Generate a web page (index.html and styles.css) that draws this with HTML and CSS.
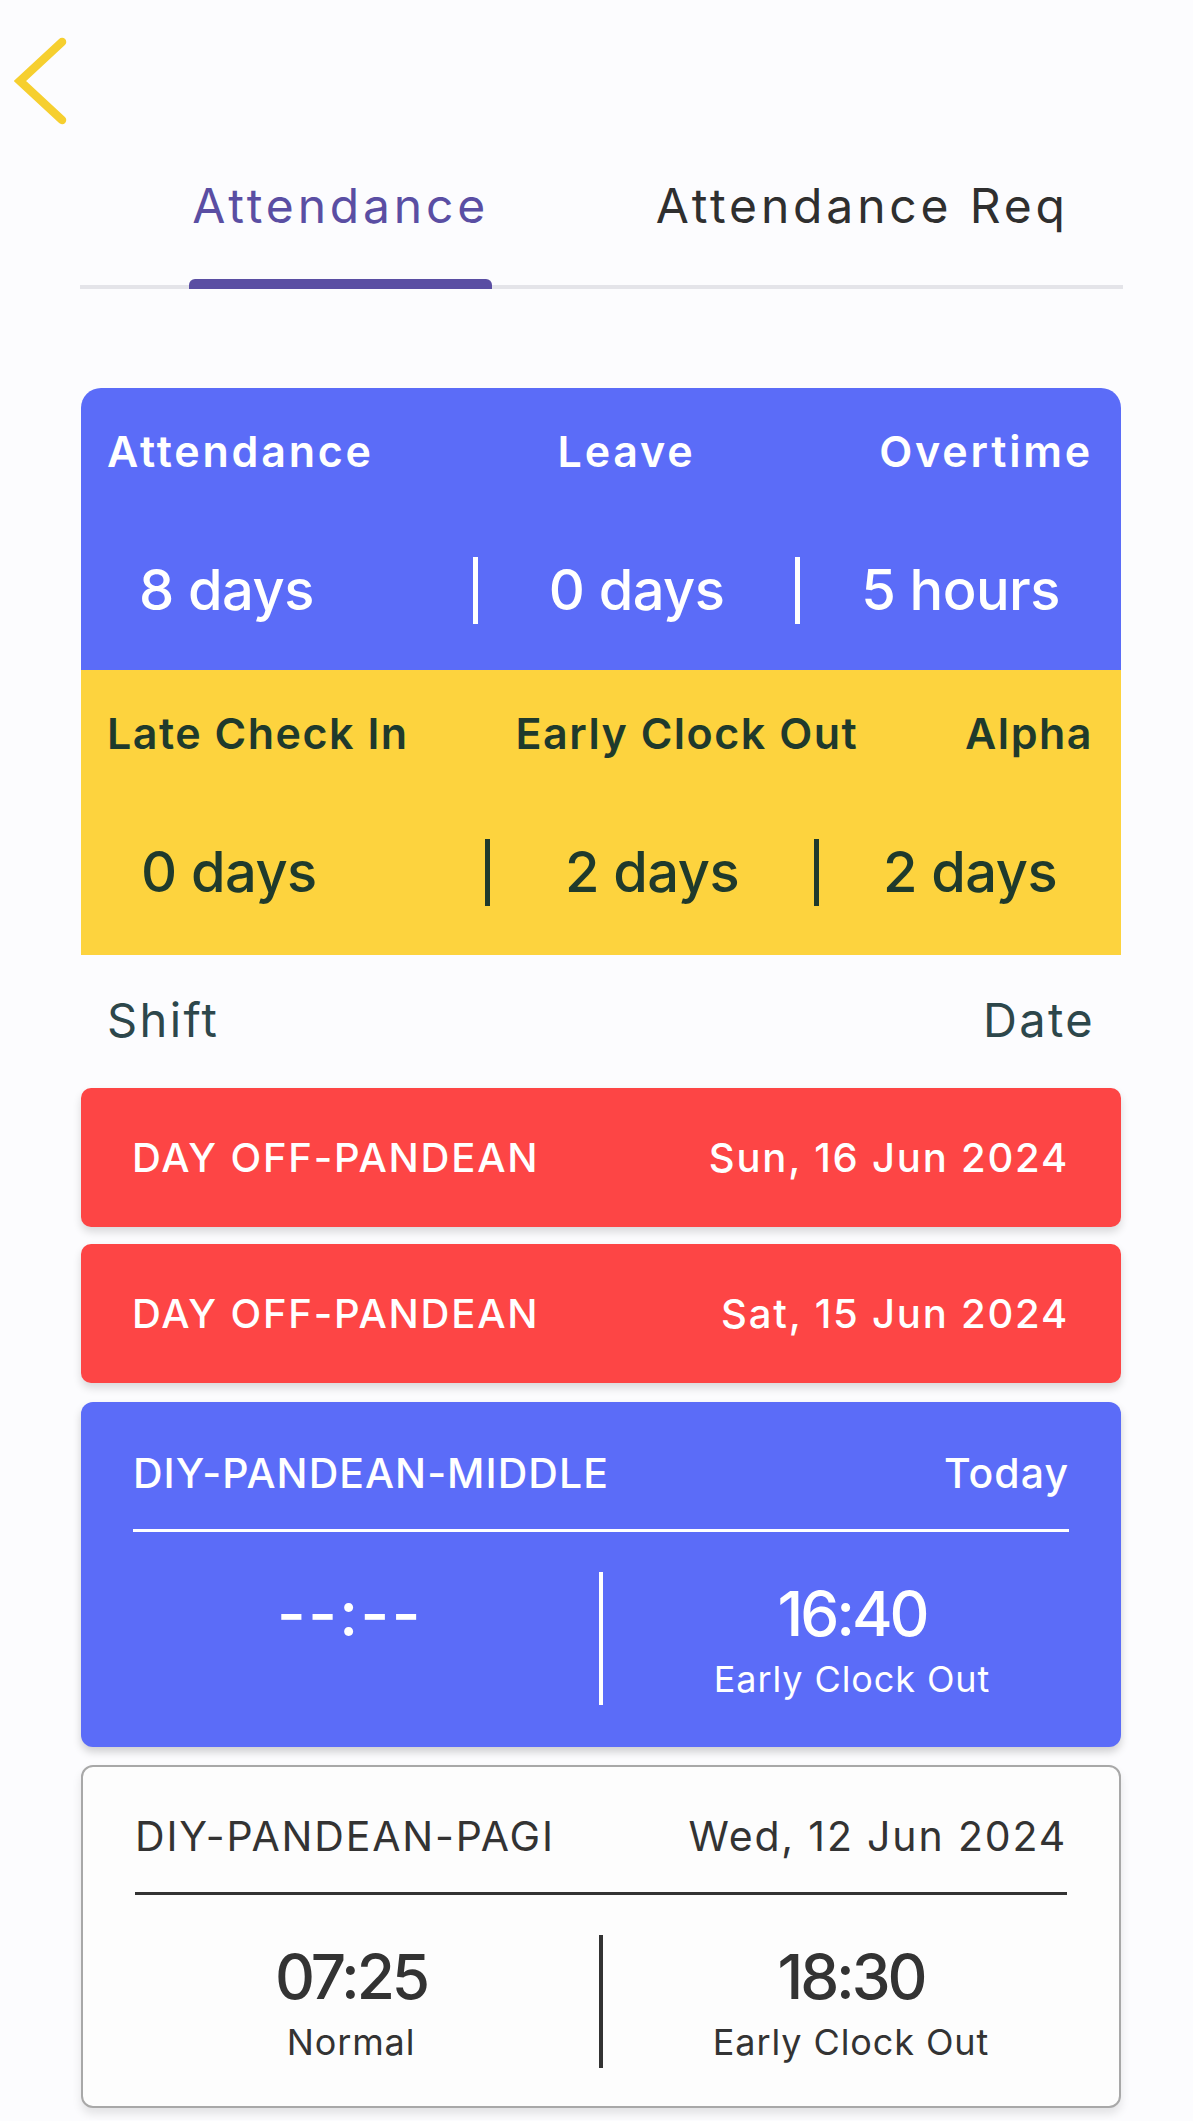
FILE: index.html
```html
<!doctype html>
<html lang="en">
<head>
    <meta charset="utf-8">
    <title>Attendance</title>
    <meta name="viewport" content="width=1193">
    <link rel="stylesheet" href="styles.css">
</head>
<body>
<div class="topbar">
    <svg class="back" width="54" height="88" viewBox="0 0 54 88" xmlns="http://www.w3.org/2000/svg">
        <polyline points="48,5 6,44 48,83" fill="none" stroke="#f6cf2f" stroke-width="8.5" stroke-linecap="round" stroke-linejoin="miter"></polyline>
    </svg>
</div>

<div class="page">
    <div class="tabs">
        <div class="tab active"><span class="tab-label">Attendance</span></div>
        <div class="tab"><span class="tab-label">Attendance Req</span></div>
    </div>

    <div class="summary">
        <div class="summary-block blue">
            <div class="labels">
                <span>Attendance</span>
                <span>Leave</span>
                <span>Overtime</span>
            </div>
            <div class="values">
                <span class="first">8 days</span>
                <i class="bar"></i>
                <span>0 days</span>
                <i class="bar"></i>
                <span>5 hours</span>
            </div>
        </div>
        <div class="summary-block yellow">
            <div class="labels">
                <span>Late Check In</span>
                <span>Early Clock Out</span>
                <span>Alpha</span>
            </div>
            <div class="values">
                <span class="first">0 days</span>
                <i class="bar"></i>
                <span>2 days</span>
                <i class="bar"></i>
                <span>2 days</span>
            </div>
        </div>
    </div>

    <div class="list-head">
        <span>Shift</span>
        <span>Date</span>
    </div>

    <div class="day-off">
        <span>DAY OFF-PANDEAN</span>
        <span>Sun, 16 Jun 2024</span>
    </div>
    <div class="day-off">
        <span>DAY OFF-PANDEAN</span>
        <span>Sat, 15 Jun 2024</span>
    </div>

    <div class="shift today">
        <div class="shift-head">
            <span>DIY-PANDEAN-MIDDLE</span>
            <span>Today</span>
        </div>
        <div class="shift-body">
            <div class="clock">
                <span class="time empty">--:--</span>
            </div>
            <i class="bar"></i>
            <div class="clock">
                <span class="time">16:40</span>
                <span class="status">Early Clock Out</span>
            </div>
        </div>
    </div>

    <div class="shift">
        <div class="shift-head">
            <span>DIY-PANDEAN-PAGI</span>
            <span>Wed, 12 Jun 2024</span>
        </div>
        <div class="shift-body">
            <div class="clock">
                <span class="time">07:25</span>
                <span class="status">Normal</span>
            </div>
            <i class="bar"></i>
            <div class="clock">
                <span class="time">18:30</span>
                <span class="status">Early Clock Out</span>
            </div>
        </div>
    </div>
</div>
</body>
</html>
```

FILE: styles.css
```css
body {
    margin: 0;
    background-color: #fcfcfe;
    font-family: "Inter", "Noto Sans", sans-serif;
    color: #333333;
}

.topbar {
    height: 122px;
    padding-left: 14px;
    box-sizing: border-box;
    padding-top: 37px;
}

.back {
    display: block;
}

.page {
    width: 1043px;
    margin-left: 80px;
    padding-bottom: 12px;
}

/* ===== Tabs */
.tabs {
    display: flex;
    border-bottom: 4px solid #e4e4e9;
}

.tab {
    flex: 1;
    text-align: center;
    padding-top: 54px;
    padding-bottom: 49px;
}

.tab-label {
    position: relative;
    display: inline-block;
    padding: 0 3px;
    font-size: 48px;
    line-height: 60px;
    letter-spacing: 0.08em;
    color: #2f2f2f;
}

.tab.active .tab-label {
    color: #5a4ea3;
}

.tab.active .tab-label::after {
    content: '';
    position: absolute;
    left: 0;
    right: 0;
    bottom: -53px;
    height: 10px;
    border-radius: 6px 6px 0 0;
    background-color: #5a4ea3;
}

/* ===== Summary card */
.summary {
    margin-top: 99px;
    width: 1040px;
    margin-left: 1px;
    border-radius: 20px 20px 0 0;
    overflow: hidden;
}

.summary-block {
    padding: 38px 0 45px;
}

.summary-block.blue {
    background-color: #5b6cf8;
    color: #ffffff;
}

.summary-block.yellow {
    background-color: #fdd33e;
    color: #1f3a2c;
    padding-bottom: 48px;
}

.labels {
    display: flex;
    justify-content: space-between;
    padding: 0 28px 0 26px;
    font-size: 43px;
    line-height: 50px;
    font-weight: 600;
    letter-spacing: 0.065em;
}

.yellow .labels {
    letter-spacing: 0.035em;
}

.values {
    display: grid;
    grid-template-columns: 392px 5px 317px 5px 1fr;
    align-items: center;
    margin-top: 79px;
    height: 70px;
    font-size: 56px;
    line-height: 70px;
    font-weight: 500;
    letter-spacing: -0.01em;
    text-align: center;
}

.yellow .values {
    grid-template-columns: 404px 5px 324px 5px 1fr;
}

.values .first {
    text-align: left;
    padding-left: 58px;
}

.yellow .values .first {
    padding-left: 60px;
}

.values .bar {
    display: block;
    height: 67px;
    background-color: currentColor;
}

/* ===== List */
.list-head {
    display: flex;
    justify-content: space-between;
    margin-top: 35px;
    padding: 0 28px 0 27px;
    font-size: 47px;
    line-height: 60px;
    letter-spacing: 0.05em;
    color: #2d474b;
}

.day-off {
    display: flex;
    justify-content: space-between;
    align-items: center;
    width: 1040px;
    height: 139px;
    margin: 38px 0 0 1px;
    padding: 0 52px 0 51px;
    box-sizing: border-box;
    border-radius: 10px;
    background-color: #fd4545;
    box-shadow: 0 5px 9px rgba(0, 0, 0, 0.14);
    color: #ffffff;
    font-size: 40px;
    font-weight: 500;
    letter-spacing: 0.045em;
}

.day-off + .day-off {
    margin-top: 17px;
}

.shift {
    width: 1040px;
    height: 343px;
    margin: 18px 0 0 1px;
    box-sizing: border-box;
    border: 2px solid #a8a8a8;
    border-radius: 12px;
    background-color: #fdfdfd;
    box-shadow: 0 6px 10px rgba(0, 0, 0, 0.10);
    color: #333333;
}

.shift.today {
    height: 345px;
    margin-top: 19px;
    border: none;
    background-color: #5b6cf8;
    color: #ffffff;
    box-shadow: 0 5px 9px rgba(0, 0, 0, 0.18);
}

.shift-head {
    display: flex;
    justify-content: space-between;
    margin: 0 52px;
    padding: 46px 0 31px;
    border-bottom: 3px solid currentColor;
    font-size: 41px;
    line-height: 50px;
    letter-spacing: 0.025em;
}

.shift.today .shift-head {
    font-weight: 500;
}

.shift:not(.today) .shift-head {
    padding-top: 44px;
    letter-spacing: 0.045em;
}

.shift-body {
    display: grid;
    grid-template-columns: 1fr 4px 1fr;
    padding: 40px 20px 0;
}

.shift-body .bar {
    display: block;
    height: 133px;
    background-color: currentColor;
}

.clock {
    display: flex;
    flex-direction: column;
    align-items: center;
    padding-top: 7px;
}

.time {
    font-size: 62px;
    line-height: 70px;
    font-weight: 500;
    letter-spacing: -0.05em;
}

.time.empty {
    letter-spacing: 0.04em;
}

.status {
    margin-top: 7px;
    font-size: 36px;
    line-height: 46px;
    letter-spacing: 0.025em;
}
```
